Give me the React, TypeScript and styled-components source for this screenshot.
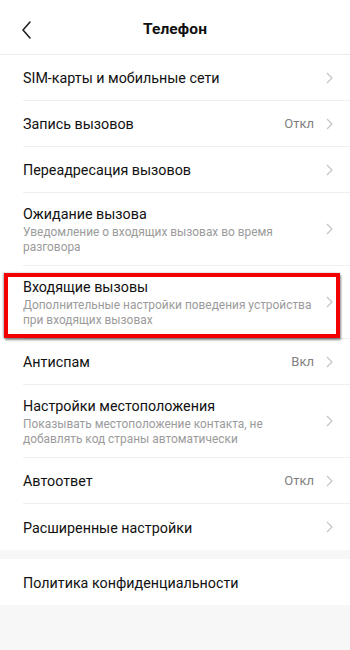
import React from "react"
import styled, { createGlobalStyle } from "styled-components"

const GlobalStyle = createGlobalStyle`
  html, body {
    margin: 0;
    padding: 0;
    background: #f7f7f7;
  }
  body {
    font-family: Roboto, "Noto Sans", "Liberation Sans", sans-serif;
    -webkit-font-smoothing: antialiased;
  }
`

interface Item {
  title: string
  subtitle?: string
  value?: string
  highlighted?: boolean
}

const groups: Item[][] = [
  [
    { title: "SIM-карты и мобильные сети" },
    { title: "Запись вызовов", value: "Откл" },
    { title: "Переадресация вызовов" },
    {
      title: "Ожидание вызова",
      subtitle: "Уведомление о входящих вызовах во время разговора",
    },
    {
      title: "Входящие вызовы",
      subtitle:
        "Дополнительные настройки поведения устройства при входящих вызовах",
      highlighted: true,
    },
    { title: "Антиспам", value: "Вкл" },
    {
      title: "Настройки местоположения",
      subtitle:
        "Показывать местоположение контакта, не добавлять код страны автоматически",
    },
    { title: "Автоответ", value: "Откл" },
    { title: "Расширенные настройки" },
  ],
  [{ title: "Политика конфиденциальности" }],
]

const Page = styled.div`
  width: 350px;
  min-height: 650px;
  background: #f7f7f7;
`

const Header = styled.header`
  display: flex;
  align-items: center;
  justify-content: center;
  position: relative;
  background: #fff;
  border-bottom: 1px solid #ececec;
  padding-top: 4px;
  height: 50px;
`

const BackButton = styled.div`
  position: absolute;
  left: 20px;
  top: 20px;
  width: 14px;
  height: 20px;
`

const Title = styled.h1`
  margin: 0;
  font-size: 15.5px;
  font-weight: 700;
  color: #111;
  letter-spacing: 0.1px;
`

const Group = styled.section<{ $last?: boolean }>`
  background: #fff;
  margin-bottom: ${({ $last }) => ($last ? "0" : "9px")};
`

const Row = styled.div<{ $tall: boolean }>`
  position: relative;
  display: flex;
  align-items: center;
  min-height: ${({ $tall }) => ($tall ? "72px" : "46px")};
  padding-left: 23px;
  box-sizing: border-box;
`

const RowInner = styled.div<{ $divider: boolean }>`
  flex: 1;
  align-self: stretch;
  display: flex;
  align-items: center;
  padding-right: 17px;
  border-bottom: ${({ $divider }) => ($divider ? "1px solid #efefef" : "none")};
`

const Texts = styled.div`
  flex: 1;
  display: flex;
  flex-direction: column;
  padding: 11px 0 10px;
`

const ItemTitle = styled.div`
  font-size: 14.3px;
  line-height: 20px;
  color: #111;
`

const Subtitle = styled.div`
  font-size: 11.9px;
  line-height: 15px;
  color: #9b9b9b;
  margin-top: 1px;
  padding-right: 10px;
`

const Value = styled.span`
  font-size: 13px;
  color: #7f7f7f;
  margin-right: 12px;
`

const Chevron = styled.svg`
  width: 7px;
  height: 12px;
  flex-shrink: 0;
`

const Highlight = styled.div`
  position: absolute;
  left: 4px;
  right: 10px;
  top: 7px;
  bottom: 1px;
  border: 4px solid #f20000;
  box-shadow: 1px 2px 2px rgba(0, 0, 0, 0.45), -1px 0 2px rgba(0, 0, 0, 0.3);
  pointer-events: none;
`

const App: React.FC = () => {
  return (
    <Page>
      <GlobalStyle />
      <Header>
        <BackButton>
          <svg width="14" height="20" viewBox="0 0 14 20">
            <path
              d="M10 2 L3 10 L10 18"
              fill="none"
              stroke="#222"
              strokeWidth="1.6"
              strokeLinecap="round"
              strokeLinejoin="round"
            />
          </svg>
        </BackButton>
        <Title>Телефон</Title>
      </Header>
      {groups.map((group, gi) => (
        <Group key={gi} $last={gi === groups.length - 1}>
          {group.map((item, i) => (
            <Row key={item.title} $tall={!!item.subtitle}>
              <RowInner $divider={i < group.length - 1}>
                <Texts>
                  <ItemTitle>{item.title}</ItemTitle>
                  {item.subtitle && <Subtitle>{item.subtitle}</Subtitle>}
                </Texts>
                {item.value && <Value>{item.value}</Value>}
                {gi === 0 && (
                  <Chevron viewBox="0 0 7 12">
                    <path
                      d="M1 1 L6 6 L1 11"
                      fill="none"
                      stroke="#c2c2c2"
                      strokeWidth="1.1"
                    />
                  </Chevron>
                )}
              </RowInner>
              {item.highlighted && <Highlight />}
            </Row>
          ))}
        </Group>
      ))}
    </Page>
  )
}

export default App
